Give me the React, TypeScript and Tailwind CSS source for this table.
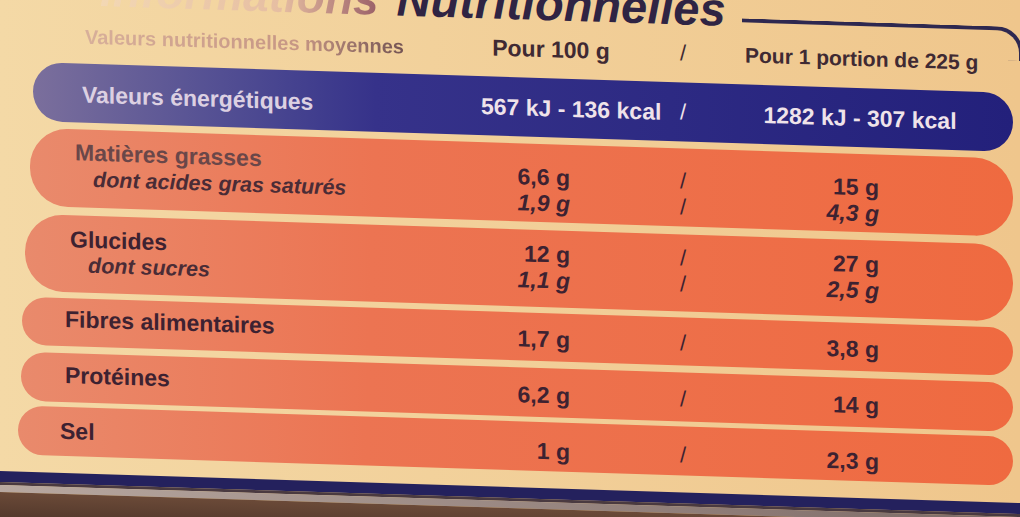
import React from 'react';

// Tableau des valeurs nutritionnelles (photo d'emballage, légèrement inclinée)
const cols = 'grid grid-cols-[1fr_140px_124px_222px] pr-[46px]';
const orange = 'bg-linear-to-r from-[#e98a6c] via-[#ec7452] via-35% to-[#ef6a40]';

type RowProps = {
    box: string;
    labelBox: string;
    valueBox: string;
    labels: string[];
    per100: string[];
    portion: string[];
    labelColor?: string;
};

function NutriRow({ box, labelBox, valueBox, labels, per100, portion, labelColor }: RowProps) {
    return (
        <div className={`${box} ${orange} ${cols} mr-[7px] font-bold text-[#3d2231]`}>
            <div className={`flex flex-col ${labelBox}`}>
                {labels.map((l, i) => (
                    <span
                        key={l}
                        className={
                            i === 0
                                ? `whitespace-nowrap text-[23px] ${labelColor ?? ''}`
                                : 'whitespace-nowrap italic text-[21.5px] pl-[18px] text-[#4a2c36]'
                        }
                    >
                        {l}
                    </span>
                ))}
            </div>
            <div className={`flex flex-col text-right pr-[51px] text-[23px] ${valueBox}`}>
                {per100.map((v, i) => (
                    <span key={i} className={i === 1 ? 'italic' : ''}>{v}</span>
                ))}
            </div>
            <div className={`flex flex-col items-center font-normal text-[22px] ${valueBox}`}>
                {per100.map((_, i) => (
                    <span key={i}>/</span>
                ))}
            </div>
            <div className={`flex flex-col text-right pr-[88px] text-[23px] ${valueBox}`}>
                {portion.map((v, i) => (
                    <span key={i} className={i === 1 ? 'italic' : ''}>{v}</span>
                ))}
            </div>
        </div>
    );
}

export default function App() {
    return (
        <div className="w-[1020px] h-[517px] overflow-hidden bg-linear-to-r from-[#f4d9a6] to-[#efc68c] font-['Liberation_Sans',Arial,sans-serif]">
            <div className="w-[1020px] h-[517px] skew-y-[1.8deg] flex flex-col">
                {/* Titre */}
                <div className="h-[26px] flex items-end shrink-0">
                    <span className="ml-[100px] font-bold italic text-[46px] leading-[46px] whitespace-nowrap bg-linear-to-r from-[#f3d8b4] via-[#e6bea2] via-65% to-[#9a6068] bg-clip-text text-transparent">
                        Informations
                    </span>
                    <span className="ml-[18px] font-bold italic text-[47px] leading-[46px] whitespace-nowrap text-[#2f2443]">
                        Nutritionnelles
                    </span>
                    <div className="self-start mt-[11px] ml-[16px] -mr-[3px] flex-1 h-[34px] border-t-4 border-r-4 border-[#2e2850] rounded-tr-[26px]" />
                </div>

                {/* En-tête */}
                <div className={`${cols} h-[51px] shrink-0 ml-[28px] mr-[7px] pt-[11px] items-start font-bold leading-[22px] text-[#3f2a33]`}>
                    <span className="pl-[57px] mt-[2px] text-[20px] whitespace-nowrap bg-linear-to-r from-[#dcb6a0] via-[#c69684] via-60% to-[#3d2832] bg-clip-text text-transparent">
                        Valeurs nutritionnelles moyennes
                    </span>
                    <span className="text-center text-[23px] whitespace-nowrap">Pour 100 g</span>
                    <span className="text-center font-normal text-[22px]">/</span>
                    <span className="text-center text-[21px] whitespace-nowrap">Pour 1 portion de 225 g</span>
                </div>

                {/* Valeurs énergétiques */}
                <div className={`${cols} h-[59px] shrink-0 ml-[33px] mr-[7px] rounded-full items-center font-bold text-[23px] leading-[26px] bg-linear-to-r from-[#7b6f9c] via-[#36328a] via-35% to-[#23207b]`}>
                    <span className="pl-[49px] pt-[2px] whitespace-nowrap text-[#dcd0e2]">Valeurs énergétiques</span>
                    <span className="text-center whitespace-nowrap text-[#efe3ea]">567 kJ - 136 kcal</span>
                    <span className="text-center font-normal text-[22px] text-[#efe3ea]">/</span>
                    <span className="text-center pl-[8px] whitespace-nowrap text-[#efe3ea]">1282 kJ - 307 kcal</span>
                </div>

                <div className="flex flex-col shrink-0">
                    <NutriRow
                        box="mt-[7px] h-[78px] ml-[30px] rounded-[38px]"
                        labelBox="pl-[45px] pt-[10px] leading-[27px]"
                        valueBox="pt-[20px] leading-[26px]"
                        labels={['Matières grasses', 'dont acides gras saturés']}
                        per100={['6,6 g', '1,9 g']}
                        portion={['15 g', '4,3 g']}
                        labelColor="text-[#6a4749]"
                    />
                    <NutriRow
                        box="mt-[8px] h-[77px] ml-[25px] rounded-[38px]"
                        labelBox="pl-[45px] pt-[11px] leading-[26px]"
                        valueBox="pt-[11px] leading-[26px]"
                        labels={['Glucides', 'dont sucres']}
                        per100={['12 g', '1,1 g']}
                        portion={['27 g', '2,5 g']}
                    />
                    <NutriRow
                        box="mt-[6px] h-[48px] ml-[22px] rounded-full"
                        labelBox="pl-[43px] pt-[8px] leading-[26px]"
                        valueBox="pt-[13px] leading-[26px]"
                        labels={['Fibres alimentaires']}
                        per100={['1,7 g']}
                        portion={['3,8 g']}
                    />
                    <NutriRow
                        box="mt-[7px] h-[49px] ml-[21px] rounded-full"
                        labelBox="pl-[44px] pt-[9px] leading-[26px]"
                        valueBox="pt-[14px] leading-[26px]"
                        labels={['Protéines']}
                        per100={['6,2 g']}
                        portion={['14 g']}
                    />
                    <NutriRow
                        box="mt-[5px] h-[49px] ml-[18px] rounded-full"
                        labelBox="pl-[42px] pt-[11px] leading-[26px]"
                        valueBox="pt-[16px] leading-[26px]"
                        labels={['Sel']}
                        per100={['1 g']}
                        portion={['2,3 g']}
                    />
                </div>

                {/* Bord de la boîte */}
                <div className="mt-[17px] h-[11px] shrink-0 bg-[#24215d]" />
                <div className="h-[3px] shrink-0 bg-[#4a3a40]" />
                <div className="h-[7px] shrink-0 bg-linear-to-r from-[#b8a8a0] to-[#7d6a66]" />
                <div className="h-[70px] shrink-0 bg-linear-to-b from-[#6b4a38] to-[#2e1e18]" />
            </div>
        </div>
    );
}
